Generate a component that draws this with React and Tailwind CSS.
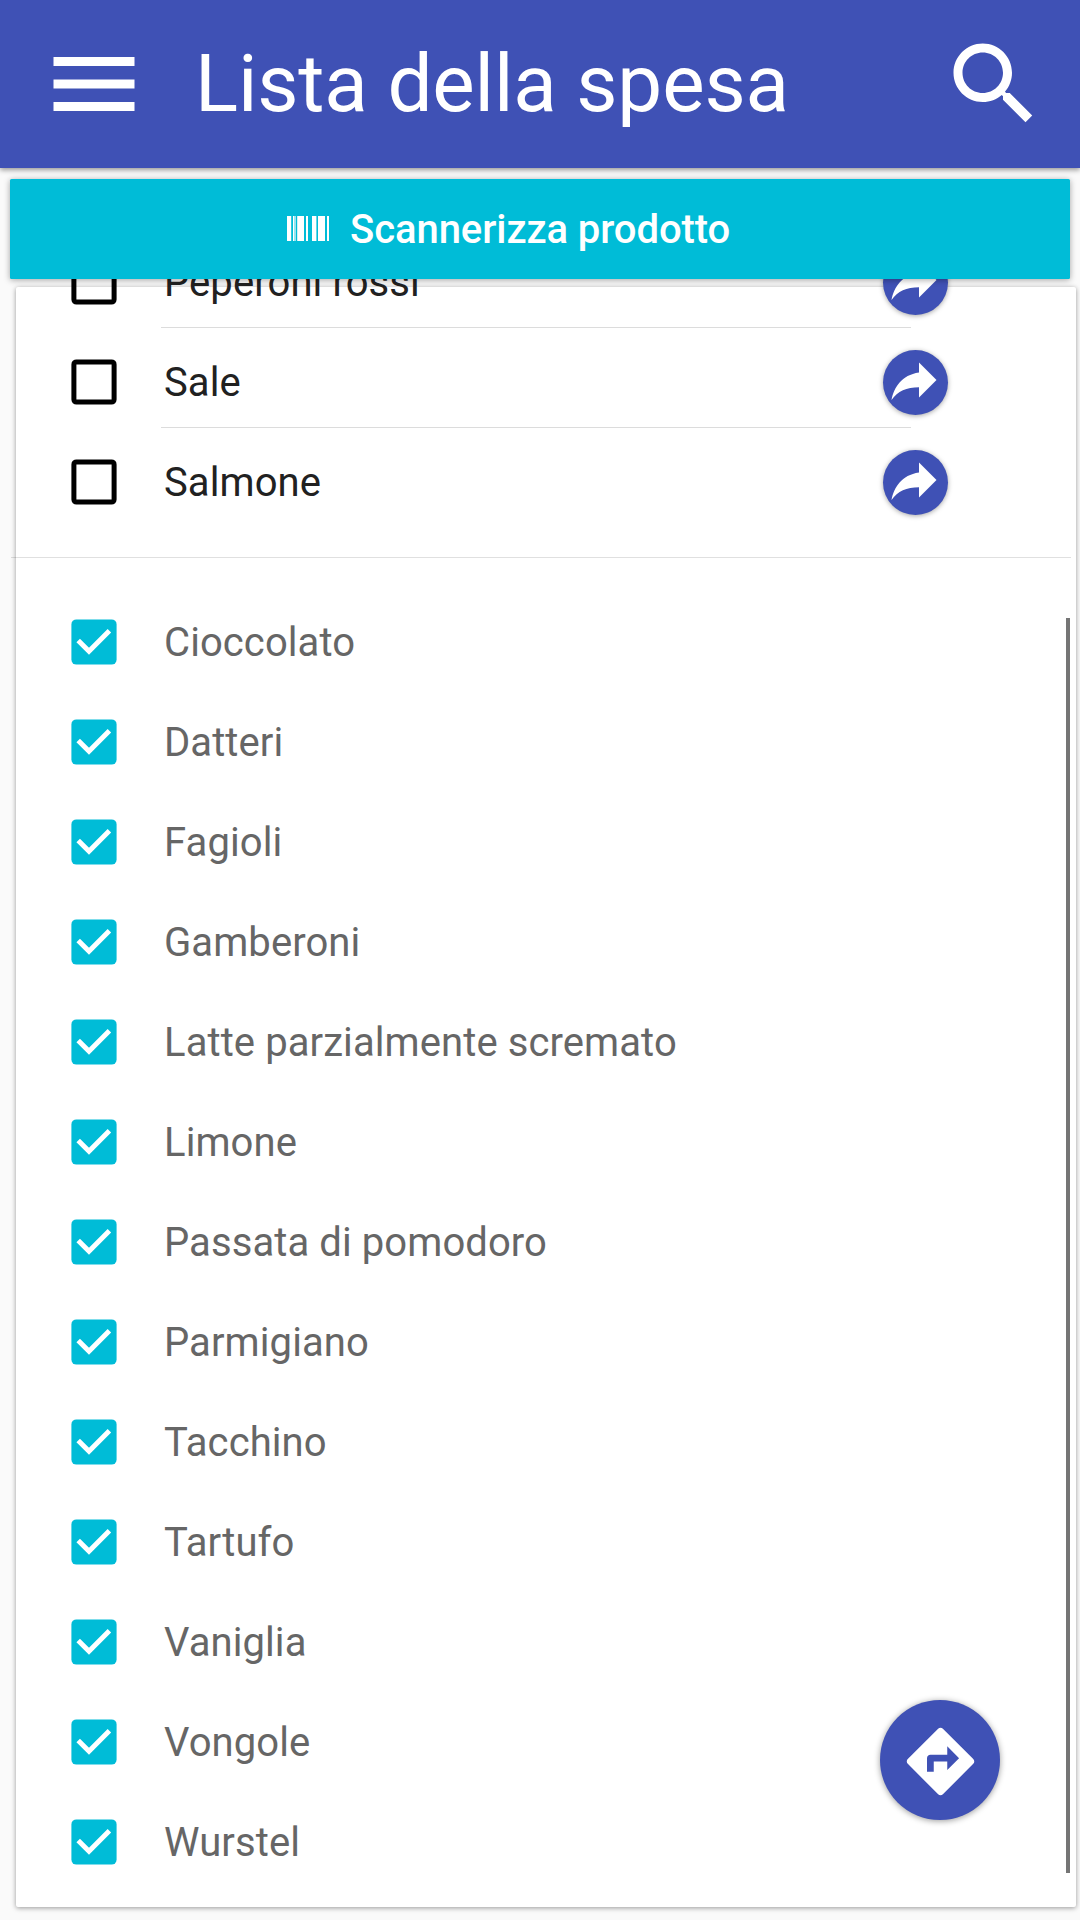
import React from "react";

const todo = ["Peperoni rossi", "Sale", "Salmone"];
const done = [
  "Cioccolato", "Datteri", "Fagioli", "Gamberoni", "Latte parzialmente scremato", "Limone",
  "Passata di pomodoro", "Parmigiano", "Tacchino", "Tartufo", "Vaniglia", "Vongole", "Wurstel",
];

function CheckedBox() {
  return (
    <svg viewBox="0 0 46 46" className="size-[46px] shrink-0">
      <rect x="0.4" y="0.4" width="45.2" height="45.2" rx="5" fill="#00bcd7" />
      <path d="M7.2 21.4L18 32.2L38.4 11.8" fill="none" stroke="#fff" strokeWidth="5" />
    </svg>
  );
}

function EmptyBox() {
  return (
    <svg viewBox="0 0 46 46" className="size-[46px] shrink-0">
      <rect x="2.9" y="2.9" width="40.2" height="40.2" rx="2.5" fill="none" stroke="#000" strokeWidth="5" />
    </svg>
  );
}

function TodoRow({ name, divider }) {
  return (
    <li className="flex h-[100px] pl-[71px]">
      <div className="flex items-center"><EmptyBox /></div>
      <div className="relative ml-[43.5px] flex w-[750px] items-center pl-[3.5px]">
        <span className="pt-[2px] text-[40px] leading-[46px] tracking-[0.09px] text-[#212121]">{name}</span>
        {divider && <span className="absolute bottom-[4px] left-0 h-px w-full bg-[#dcdcdc]" />}
        <button className="absolute top-[18px] -right-[37.5px] flex size-[65px] items-start justify-start rounded-full bg-[#3f51b5] shadow-[0_1px_5px_rgba(0,0,0,0.35)]">
          <svg viewBox="0 0 24 24" className="ml-[1px] size-[60px] max-w-none" fill="#fff">
            <path transform="matrix(-1 0 0 1 24 0)" d="M10 9V5l-7 7 7 7v-4.1c5 0 8.5 1.6 11 5.1-1-5-4-10-11-11z" />
          </svg>
        </button>
      </div>
    </li>
  );
}

export default function App() {
  return (
    <div className="flex h-[1920px] w-[1080px] flex-col overflow-hidden bg-[#fafafa] font-[Roboto,sans-serif]">
      <header className="relative z-20 flex h-[168px] shrink-0 items-start bg-[#3f51b5] pl-[40px] text-white shadow-[0_2px_5px_rgba(0,0,0,0.4)]">
        <svg viewBox="0 0 24 24" className="mt-[30px] size-[108px]" fill="#fff">
          <path d="M3 18h18v-2H3v2zm0-5h18v-2H3v2zm0-7v2h18V6H3z" />
        </svg>
        <h1 className="ml-[47px] mt-[37px] flex-1 text-[80px] leading-[94px] tracking-[-0.16px]">Lista della spesa</h1>
        <svg viewBox="0 0 24 24" className="mr-[32px] mt-[30px] size-[108px]" fill="#fff">
          <path d="M15.5 14h-.79l-.28-.27C15.41 12.59 16 11.11 16 9.5 16 5.91 13.09 3 9.5 3S3 5.91 3 9.5 5.91 16 9.5 16c1.61 0 3.09-.59 4.23-1.57l.27.28v.79l5 4.99L20.49 19l-4.99-5zm-6 0C7.01 14 5 11.99 5 9.5S7.01 5 9.5 5 14 7.01 14 9.5 11.99 14 9.5 14z" />
        </svg>
      </header>
      <button className="relative z-10 ml-[10px] mt-[11px] flex h-[100px] w-[1060px] shrink-0 items-center rounded-[1.5px] bg-[#00bcd7] pl-[277px] text-white shadow-[0_1px_6px_rgba(0,0,0,0.35)]">
        <svg viewBox="0 0 42 25" className="mb-[1px] h-[25px] w-[42px]" fill="#fff">
          <path d="M0 0h4.2v25H0zM6 0h1v25H6zM7.4 0h1.2v25H7.4zM10.2 0h6.8v25h-6.8zM19 0h2v25h-2zM25 0h4.4v25H25zM31 0h7v25h-7zM40 0h2v25h-2z" />
        </svg>
        <span className="ml-[21px] pt-[2px] text-[40px] font-medium leading-[46px] tracking-[-0.07px]">Scannerizza prodotto</span>
      </button>
      <main className="relative ml-[16px] mt-[8px] h-[1620px] w-[1060px] shrink-0 rounded-[2px] bg-white shadow-[0_1px_5px_rgba(0,0,0,0.4)]">
        <div className="-ml-[16px] -mt-[55px] w-[1080px]">
          <ul className="h-[325px]">
            {todo.map((name, i) => <TodoRow key={name} name={name} divider={i < 2} />)}
          </ul>
          <hr className="ml-[10.5px] w-[1060px] border-t border-black/12" />
          <ul className="pt-[34px]">
            {done.map((name) => (
              <li key={name} className="flex h-[100px] items-center pl-[71px]">
                <CheckedBox />
                <span className="ml-[47px] pt-[2px] text-[40px] leading-[46px] tracking-[0.09px] text-[#666]">{name}</span>
              </li>
            ))}
          </ul>
        </div>
        <div className="absolute right-[6px] top-[331px] h-[1254.5px] w-[4px] bg-[#757575]" />
        <button className="absolute bottom-[87px] right-[76px] flex size-[120px] items-center justify-center rounded-full bg-[#3f51b5] shadow-[0_1px_6px_rgba(0,0,0,0.4)]">
          <svg viewBox="0 0 24 24" className="mt-[2px] size-[81px]" fill="#fff">
            <path d="M21.71 11.29l-9-9c-.39-.39-1.02-.39-1.41 0l-9 9c-.39.39-.39 1.02 0 1.41l9 9c.39.39 1.02.39 1.41 0l9-9c.39-.38.39-1.01 0-1.41zM14 14.5V12h-4v3H8v-4c0-.55.45-1 1-1h5V7.5l3.5 3.5-3.5 3.5z" />
          </svg>
        </button>
      </main>
    </div>
  );
}
